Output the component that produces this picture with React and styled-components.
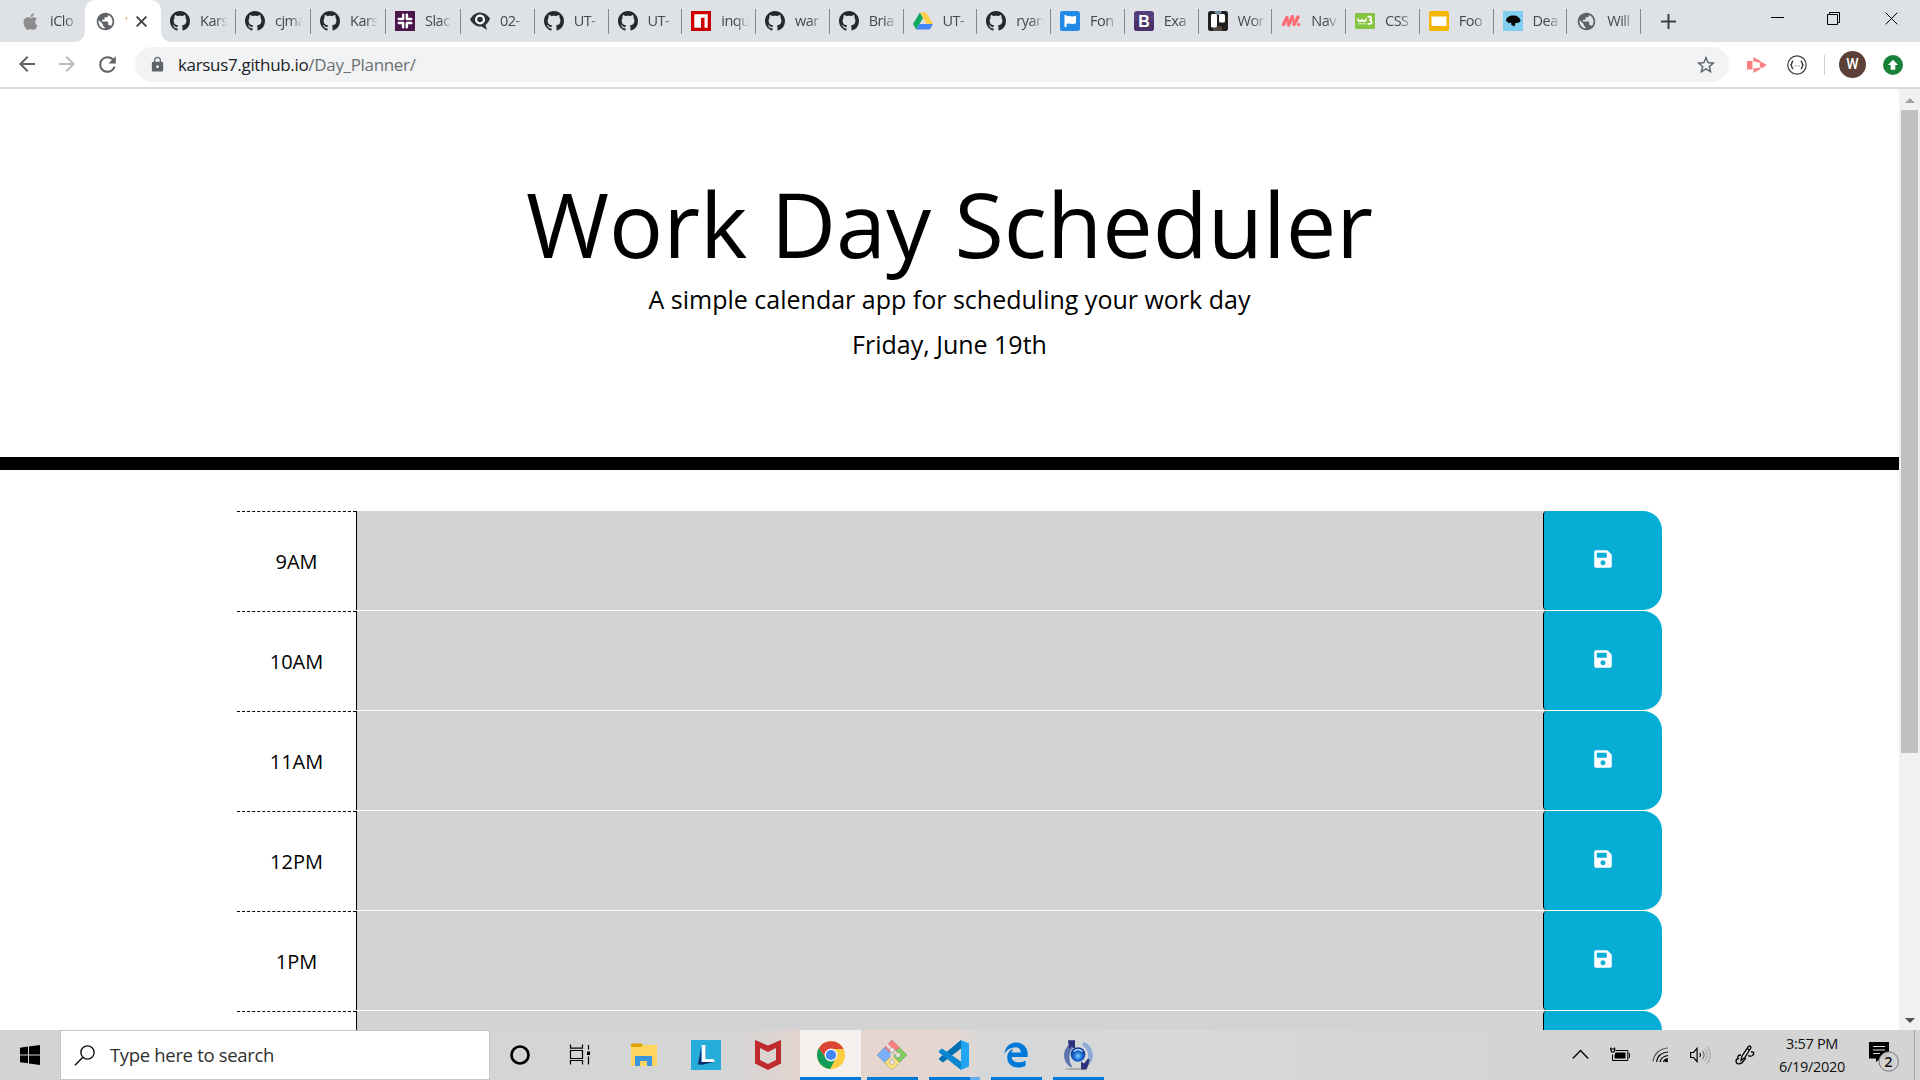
import React from "react";
import styled, { createGlobalStyle } from "styled-components";
import { FaApple, FaSave, FaEdgeLegacy } from "react-icons/fa";
import { MdPublic, MdLock, MdArrowBack, MdArrowForward, MdRefresh, MdStarBorder } from "react-icons/md";

const GlobalStyle = createGlobalStyle`
  * { box-sizing: border-box; }
  html, body { margin: 0; padding: 0; background: #fff; overflow: hidden; }
  svg { display: block; flex: none; }
`;

const Screen = styled.div`
  width: 1920px;
  height: 1080px;
  display: flex;
  flex-direction: column;
  overflow: hidden;
  font-family: "Open Sans", "Noto Sans", sans-serif;
  color: #000;
`;

/* ---------- Browser chrome ---------- */

const TabStrip = styled.div`
  height: 42px;
  flex: none;
  display: flex;
  background: #dee1e6;
`;

const Tab = styled.div`
  width: ${(p) => p.$width}px;
  height: 42px;
  flex: none;
  display: flex;
  align-items: center;
  padding-left: ${(p) => p.$pad ?? 9}px;
`;

const ActiveTab = styled(Tab)`
  background: #fff;
  border-radius: 10px 10px 0 0;
  position: relative;
  &::before,
  &::after {
    content: "";
    position: absolute;
    bottom: 0;
    width: 10px;
    height: 10px;
  }
  &::before {
    left: -10px;
    background: radial-gradient(circle at 0 0, transparent 9.5px, #fff 10px);
  }
  &::after {
    right: -10px;
    background: radial-gradient(circle at 100% 0, transparent 9.5px, #fff 10px);
  }
`;

const TabTitle = styled.span`
  min-width: 28px;
  margin-left: 10px;
  white-space: nowrap;
  font-size: 14.5px;
  letter-spacing: -0.5px;
  line-height: 20px;
  color: #45494d;
  mask-image: linear-gradient(to right, #000 15px, transparent 28px);
`;

const ActiveSliver = styled.span`
  width: 4px;
  margin-left: 9px;
  font-size: 13px;
  line-height: 18px;
  color: #d99a4a;
`;

const TabDivider = styled.i`
  width: 1px;
  height: 25px;
  margin-left: auto;
  background: #85888d;
`;

const CloseSlot = styled.span`
  margin-left: 7px;
`;

const WindowButtons = styled.div`
  display: flex;
  flex: 1;
  align-items: center;
  padding-left: 20px;
`;

const WindowGlyph = styled.span`
  margin-left: ${(p) => p.$gap}px;
  margin-top: ${(p) => p.$drop ?? -5}px;
`;

const Toolbar = styled.div`
  height: 47px;
  flex: none;
  display: flex;
  align-items: center;
  border-bottom: 2px solid #d9dae0;
  background: #fff;
`;

const NavButtons = styled.div`
  width: 135px;
  display: flex;
  padding-left: 15px;
  gap: 16px;
  color: #5f6368;
`;

const AddressBar = styled.div`
  width: 1594px;
  height: 35px;
  display: flex;
  align-items: center;
  padding: 0 12px 0 14px;
  border-radius: 18px;
  background: #f1f3f4;
  color: #5f6368;
`;

const Url = styled.span`
  flex: 1;
  margin-left: 12px;
  font-size: 17px;
  letter-spacing: -0.33px;
  line-height: 24px;
  white-space: nowrap;
  color: #6b6f73;
  b { font-weight: 400; color: #202124; }
`;

const Extensions = styled.div`
  display: flex;
  flex: 1;
  align-items: center;
  padding-left: 18px;
`;

const ToolDivider = styled.i`
  width: 1px;
  height: 20px;
  margin-left: 17px;
  background: #cdd0d3;
`;

const Avatar = styled.span`
  width: 27px;
  height: 27px;
  margin: 0 17px 0 14px;
  border-radius: 50%;
  background: #5d4037;
  color: #fff;
  font: 500 14px/27px Roboto, sans-serif;
  text-align: center;
`;

/* ---------- Page ---------- */

const Viewport = styled.div`
  height: 941px;
  flex: none;
  display: flex;
`;

const Page = styled.main`
  width: 1899px;
  height: 941px;
  overflow: hidden;
  background: #fff;
`;

const Jumbotron = styled.header`
  height: 381px;
  display: flex;
  flex-direction: column;
  align-items: center;
  padding-top: 80px;
  border-bottom: 13px solid #000;
`;

const Title = styled.h1`
  margin: 0 0 3px;
  font-size: 90px;
  font-weight: 400;
  line-height: 108px;
  white-space: nowrap;
`;

const Lead = styled.p`
  margin: 0 0 7px;
  font-size: 25px;
  line-height: 38px;
  white-space: nowrap;
`;

const Planner = styled.section`
  width: 1425px;
  margin: 41px 0 0 237px;
`;

const TimeBlock = styled.div`
  height: 100px;
  display: flex;
`;

const Hour = styled.div`
  width: 119px;
  height: 100px;
  padding-top: 35px;
  border-top: 1px dashed #000;
  font-size: 20px;
  line-height: 30px;
  text-align: center;
`;

const Entry = styled.div`
  width: 1187px;
  height: 99px;
  border-left: 1px solid #000;
  background: #d3d3d3;
`;

const SaveCell = styled.div`
  width: 119px;
  height: 99px;
  background: linear-gradient(to right, #d3d3d3 4px, transparent 4px);
`;

const SaveButton = styled.button`
  width: 119px;
  height: 99px;
  display: flex;
  align-items: center;
  justify-content: center;
  padding: 0 0 3px;
  border: 0;
  border-left: 1px solid #000;
  border-radius: 4px 19px 19px 4px;
  background: #06aed5;
  color: #fff;
`;

const Scrollbar = styled.aside`
  width: 21px;
  height: 941px;
  display: flex;
  flex-direction: column;
  align-items: center;
  background: #f1f1f1;
  padding: 9px 0 7px;
`;

const Thumb = styled.div`
  width: 17px;
  height: 643px;
  margin: 7px 0 auto;
  background: #c1c1c1;
`;

const ScrollArrow = styled.i`
  border: 5px solid transparent;
  ${(p) => (p.$up ? "border-bottom-color: #a3a3a3; border-top: 0;" : "border-top-color: #505050; border-bottom: 0;")}
`;

/* ---------- Taskbar ---------- */

const Taskbar = styled.footer`
  height: 50px;
  flex: none;
  display: flex;
  background: linear-gradient(to right, #d3d3d3 0, #d5d5d5 735px, #e2d4cf 800px, #e5d6cf 900px, #e4d7d0 955px, #d6d7d8 985px, #d7d8d8 1180px, #d4d4d4 1500px);
`;

const StartButton = styled.div`
  width: 60px;
  display: flex;
  align-items: center;
  padding-left: 20px;
`;

const SearchBox = styled.div`
  width: 430px;
  height: 50px;
  display: flex;
  align-items: center;
  padding-left: 13px;
  border: 1px solid #c8c8c8;
  background: #fff;
`;

const SearchText = styled.span`
  margin: 0 0 1px 15px;
  font-size: 18.5px;
  letter-spacing: -0.33px;
  line-height: 26px;
  white-space: nowrap;
  color: #2f2f2f;
`;

const Apps = styled.div`
  display: flex;
  margin-left: -1px;
`;

const AppTile = styled.div`
  width: ${(p) => (p.$active ? 61 : 62)}px;
  height: 50px;
  margin-left: ${(p) => (p.$active ? 1 : 0)}px;
  display: flex;
  flex-direction: column;
  align-items: center;
  justify-content: space-between;
  padding-top: 10px;
  background: ${(p) => (p.$active ? "#f4f0ed" : "transparent")};
`;

const Indicator = styled.i`
  width: ${(p) => (p.$wide ? 61 : 51)}px;
  height: 3px;
  margin-left: ${(p) => (p.$wide ? 0 : 1)}px;
  background: ${(p) => (p.$split ? "linear-gradient(to right, #0078d7 41px, #66acea 41px)" : "#0078d7")};
`;

const Tray = styled.div`
  flex: 1;
  display: flex;
  align-items: center;
  justify-content: flex-end;
`;

const TrayItem = styled.span`
  margin-right: ${(p) => p.$gap}px;
`;

const Clock = styled.div`
  width: 80px;
  margin-right: 17px;
  display: flex;
  flex-direction: column;
  align-items: center;
  font-size: 14.5px;
  letter-spacing: -0.3px;
  line-height: 23px;
  color: #111;
  white-space: nowrap;
`;

const ShowDesktop = styled.i`
  width: 6px;
  height: 50px;
  border-left: 1px solid #a5a5a5;
`;

/* ---------- Drawings ---------- */

const GithubIcon = () => (
  <svg width="20" height="20" viewBox="0 0 16 16">
    <path fill="#24292e" d="M8 0C3.58 0 0 3.58 0 8c0 3.54 2.29 6.53 5.47 7.59.4.07.55-.17.55-.38 0-.19-.01-.82-.01-1.49-2.01.37-2.53-.49-2.69-.94-.09-.23-.48-.94-.82-1.13-.28-.15-.68-.52-.01-.53.63-.01 1.08.58 1.23.82.72 1.21 1.87.87 2.33.66.07-.52.28-.87.51-1.07-1.78-.2-3.64-.89-3.64-3.95 0-.87.31-1.59.82-2.15-.08-.2-.36-1.02.08-2.12 0 0 .67-.21 2.2.82.64-.18 1.32-.27 2-.27.68 0 1.36.09 2 .27 1.53-1.04 2.2-.82 2.2-.82.44 1.1.16 1.92.08 2.12.51.56.82 1.27.82 2.15 0 3.07-1.87 3.75-3.65 3.95.29.25.54.73.54 1.48 0 1.07-.01 1.93-.01 2.2 0 .21.15.46.55.38A8.013 8.013 0 0016 8c0-4.42-3.58-8-8-8z" />
  </svg>
);

const SlackIcon = () => (
  <svg width="20" height="20" viewBox="0 0 20 20">
    <rect width="20" height="20" fill="#4a154b" />
    <g stroke="#fff" strokeWidth="2.5" strokeLinecap="round">
      <path d="M8.200 7.300V3.800M11.900 3.800v4.200M12.700 8.100h3.500M12 11.900h4.200M11.800 12.700v3.500M8.100 12v4.200M7.300 11.900H3.800M8 8.100H3.800" />
    </g>
  </svg>
);

const EyeIcon = () => (
  <svg width="20" height="20" viewBox="0 0 20 20">
    <path d="M0 8.5C3 3.5 6 1.5 10 1.5s7.500 2 10 6c-1 3-2.500 5-4.500 6.500l1.500 5-5.500-3.500C6.500 16 2.500 13 0 8.500z" fill="#2b3437" />
    <circle cx="10" cy="8.500" r="5" fill="#fff" />
    <circle cx="10" cy="8.500" r="2.800" fill="#2b3437" />
  </svg>
);

const NpmIcon = () => (
  <svg width="20" height="20" viewBox="0 0 20 20">
    <rect width="20" height="20" fill="#cb0000" />
    <path d="M3.300 3.300h13.400v13.400h-3.200V6.700H10v10H3.300z" fill="#fff" />
  </svg>
);

const DriveIcon = () => (
  <svg width="20" height="20" viewBox="0 0 20 20">
    <path d="M6.800 1.500h6.400L20 13h-6.500z" fill="#ffcf45" />
    <path d="M6.800 1.500L10 7 3.300 18.500 0 13z" fill="#11a861" />
    <path d="M6.600 13H20l-3.200 5.500H3.300z" fill="#4285f4" />
  </svg>
);

const FlagIcon = () => (
  <svg width="20" height="20" viewBox="0 0 20 20">
    <rect width="20" height="20" rx="2.500" fill="#228ae6" />
    <path d="M4.500 4h2v1.200c3-1 5 1.300 9.500-.5v7.600c-4 1.800-6-.5-9.500.6V16h-2z" fill="#fff" />
  </svg>
);

const BootstrapIcon = () => (
  <svg width="20" height="20" viewBox="0 0 20 20">
    <rect width="20" height="20" rx="3" fill="#563d7c" />
    <rect y="10" width="20" height="10" rx="3" fill="#4a3068" />
    <text x="10" y="15.500" textAnchor="middle" fill="#fff" fontFamily="Liberation Sans, sans-serif" fontWeight="700" fontSize="16">B</text>
  </svg>
);

const TrelloIcon = () => (
  <svg width="20" height="20" viewBox="0 0 20 20">
    <rect width="20" height="20" rx="2.500" fill="#20201f" />
    <path d="M6 0h8l-2 4H8z" fill="#6f8d9d" />
    <path d="M5 17l8-2 2 5H5z" fill="#54463f" />
    <rect x="3" y="3" width="6" height="13.500" rx="1.500" fill="#fff" />
    <rect x="11" y="3" width="6" height="8.500" rx="1.500" fill="#fff" />
  </svg>
);

const NavIcon = () => (
  <svg width="20" height="20" viewBox="0 0 20 20">
    <path d="M2.500 13.500L6 6.500M7.500 14l4-8.500M13 13.500l4-7.500" stroke="#fa6b74" strokeWidth="3.400" strokeLinecap="round" />
    <path d="M6.200 6.500l1.500 7M11.500 6l1.500 7" stroke="#fa6b74" strokeWidth="2" />
    <circle cx="17.600" cy="13.600" r="1.700" fill="#fa6b74" />
  </svg>
);

const W3Icon = () => (
  <svg width="20" height="20" viewBox="0 0 20 20">
    <rect y="2" width="20" height="16" rx="1" fill="#85c440" />
    <path d="M3 7.500c0 3.500 3.500 3.500 3.800.5.300 3 4 3 4.400-.5M12.500 6.200c4-2.200 5 2.600 1.800 3 4.200.5 2.700 5-1.800 3.300" fill="none" stroke="#fff" strokeWidth="1.700" />
    <path d="M3 12.800h8" stroke="#d9efbd" strokeWidth="1" />
  </svg>
);

const SlidesIcon = () => (
  <svg width="20" height="20" viewBox="0 0 20 20">
    <rect width="20" height="20" rx="2" fill="#f5b400" />
    <rect x="2.500" y="5.500" width="15" height="9.500" fill="#fff" />
  </svg>
);

const DeaIcon = () => (
  <svg width="20" height="20" viewBox="0 0 20 20">
    <rect width="20" height="20" fill="#81cff0" />
    <path d="M3 10c0-3.500 3.500-6 8-5.500 3 0 5 1.500 6.500 4.500.5 2-1.500 3-5 3l-1 3.500L8.500 14l-.5-2.500-2.500.7-1-1.500z" fill="#050505" />
  </svg>
);

const CloseIcon = ({ size = 13, stroke = 1, color = "#000" }) => (
  <svg width={size} height={size} viewBox="0 0 13 13">
    <path d="M.7.7l11.600 11.600M12.300.7L.7 12.300" stroke={color} strokeWidth={stroke} />
  </svg>
);

const RecorderIcon = () => (
  <svg width="20" height="18" viewBox="0 0 20 18">
    <path d="M0 5h5.500v8.500H0z" fill="#fb7f80" />
    <path d="M6.500 1l7 4-1 2-4-1.500-2 .5zM6.500 17l7-4-1-1.500-4 1-2-.5zM13.500 5.500L20 9l-6 3.800-1.500-3.800z" fill="#fb7f80" />
  </svg>
);

const BracesIcon = () => (
  <svg width="20" height="20" viewBox="0 0 20 20">
    <circle cx="10" cy="10" r="9.200" fill="none" stroke="#3f4144" strokeWidth="1.200" />
    <path d="M6.300 6.300c-2 0-1 2.800-2.300 3.700 1.300.9.300 3.700 2.300 3.700M13.700 6.300c2 0 1 2.800 2.300 3.700-1.300.9-.3 3.700-2.300 3.700" fill="none" stroke="#333" strokeWidth="1.400" />
    <path d="M7.500 10.800h5" stroke="#888" strokeWidth="1.200" strokeDasharray="1 1" />
  </svg>
);

const UpdateIcon = () => (
  <svg width="20" height="20" viewBox="0 0 20 20">
    <circle cx="10" cy="10" r="10" fill="#188038" />
    <path d="M10 4.800l5 5.200h-2.700v4.800H7.700V10H5z" fill="#fff" />
  </svg>
);

const WindowsIcon = () => (
  <svg width="20" height="20" viewBox="0 0 20 20">
    <path d="M0 2.700L8 1.600v7.800H0zM9 1.400L20 0v9.400H9zM0 10.400h8v7.900L0 17.200zM9 10.400h11V20L9 18.500z" fill="#000" />
  </svg>
);

const SearchIcon = () => (
  <svg width="21" height="21" viewBox="0 0 21 21">
    <circle cx="13.500" cy="7.500" r="6.600" fill="none" stroke="#111" strokeWidth="1.400" />
    <path d="M8.800 12.200L1 20.300" stroke="#111" strokeWidth="1.500" />
  </svg>
);

const CortanaIcon = () => (
  <svg width="30" height="30" viewBox="0 0 30 30">
    <circle cx="15" cy="15" r="8.500" fill="none" stroke="#000" strokeWidth="2.700" />
  </svg>
);

const TaskViewIcon = () => (
  <svg width="30" height="30" viewBox="0 0 30 30">
    <path d="M3.500 4.500v3.600h12V4.500M3.500 24.500v-4h12v4M3.500 10.500h12v8h-12zM21.500 5v4.500M21.500 16.500v8" fill="none" stroke="#000" strokeWidth="1.200" />
    <rect x="20" y="11.500" width="3" height="3.500" fill="#000" />
  </svg>
);

const FolderIcon = () => (
  <svg width="30" height="30" viewBox="0 0 30 30">
    <path d="M2 7h9.500L14 5h14v21H2z" fill="#ffd75e" />
    <path d="M2 14h26v12H2z" fill="#fed263" />
    <path d="M2 7V4.500Q2 3.500 3 3.500h9.500l1.200 1.500-1.700 2z" fill="#e0a100" />
    <path d="M6 26V16h17v10h-5v-5h-7v5z" fill="#3a96dd" />
  </svg>
);

const LIcon = () => (
  <svg width="30" height="30" viewBox="0 0 30 30">
    <rect width="30" height="30" fill="#26acd9" />
    <path d="M10.500 5L7 24.500l4 .2L23 22l-12-1z" fill="#0b2f66" />
    <text x="9" y="22" fill="#fff" fontFamily="Liberation Sans, sans-serif" fontWeight="700" fontSize="24">L</text>
  </svg>
);

const ShieldIcon = () => (
  <svg width="30" height="30" viewBox="0 0 30 30">
    <path d="M2 0l13 5.500L28 0v23.500L15 30 2 23.500zM7 8v12l8 4 8-4V8l-8 4z" fill="#bf2a2d" fillRule="evenodd" />
  </svg>
);

const ChromeIcon = () => (
  <svg width="30" height="30" viewBox="0 0 30 30">
    <circle cx="15" cy="15" r="14" fill="#ffcd40" />
    <path d="M2.900 8A14 14 0 0 0 14 29l6-11-5-3-5.500 2.500z" fill="#0f9d58" />
    <path d="M15 9h12.500A14 14 0 0 0 2.900 8L9 17z" fill="#db4437" />
    <circle cx="15" cy="15" r="6.500" fill="#f5f5f5" />
    <circle cx="15" cy="15" r="5.100" fill="#4285f4" />
  </svg>
);

const GitIcon = () => (
  <svg width="30" height="30" viewBox="0 0 30 30">
    <g stroke="#777" strokeWidth=".7" strokeDasharray="1.500 1">
      <path d="M15 0l7.500 7.500L15 15 7.500 7.500z" fill="#fb7d7d" />
      <path d="M22.500 7.500L30 15l-7.500 7.500L15 15z" fill="#82cf5c" />
      <path d="M15 15l7.500 7.500L15 30l-7.500-7.500z" fill="#fde37a" />
      <path d="M7.500 7.500L15 15l-7.500 7.500L0 15z" fill="#7db0fb" />
    </g>
    <path d="M9 4l6 6v13M15 10l6 5" fill="none" stroke="#e6d8d2" strokeWidth="3" />
    <g fill="#eee4e0" stroke="#888" strokeWidth=".5">
      <circle cx="15" cy="10" r="2.500" /><circle cx="15" cy="22" r="2.500" /><circle cx="21" cy="15" r="2.500" />
    </g>
  </svg>
);

const CodeIcon = () => (
  <svg width="30" height="30" viewBox="0 0 30 30">
    <path d="M22 0v8.500L4 22.500 0 19.500v-1.300z" fill="#0070b5" />
    <path d="M0 10.800L3 8.500 22 21.500V30L0 12.500z" fill="#0a86d0" />
    <path d="M22 0l8 3.500v23L22 30z" fill="#22a6f2" />
  </svg>
);

const SyncIcon = () => (
  <svg width="30" height="30" viewBox="0 0 30 30">
    <defs>
      <radialGradient id="orb" cx=".5" cy=".6">
        <stop offset="0" stopColor="#7fd4ff" />
        <stop offset=".55" stopColor="#1f6ed2" />
        <stop offset="1" stopColor="#0a3b9c" />
      </radialGradient>
    </defs>
    <ellipse cx="12" cy="29" rx="10" ry="1" fill="#aaa" />
    <path d="M8.500 4.500C-.5 9-.5 21 8.500 27C4.500 21 4.500 11 10 7z" fill="#5e74ad" stroke="#5e74ad" strokeWidth="1.500" />
    <path d="M21 3c9 4 11 16 3.500 22C27 17 26 9 20 5z" fill="#8fa9d6" stroke="#8fa9d6" strokeWidth="1.500" />
    <path d="M5 .3h7V9L8.500 6.500 6 9z" fill="#2c317c" />
    <path d="M18 21.500l3 2 4-5 1.500 1-1 5-2 5H18z" fill="#2c317c" />
    <circle cx="15" cy="14.500" r="7.300" fill="url(#orb)" />
    <path d="M10.500 11.500q4.500-4 9 0" stroke="#b9ddfa" strokeWidth="1.200" fill="none" />
  </svg>
);

const EdgeIcon = () => (
  <svg width="30" height="30" viewBox="0 0 30 30">
    <g transform="translate(2 2)"><FaEdgeLegacy size={26} color="#0078d7" /></g>
  </svg>
);

const CaretIcon = () => (
  <svg width="17" height="20" viewBox="0 0 17 20">
    <path d="M.8 13.500L8.500 5.500l7.700 8" fill="none" stroke="#000" strokeWidth="1.300" />
  </svg>
);

const BatteryIcon = () => (
  <svg width="20" height="20" viewBox="0 0 20 20">
    <path d="M5.500 5.500h12.300v10H2.500V9.500M18.500 8.500h1v4h-1" fill="none" stroke="#000" strokeWidth="1" />
    <path d="M5.500 7.500h10v6h-11v-3z" fill="#000" />
    <path d="M1 2.500v3a1.700 1.700 0 0 0 3.500 0v-3M0 4h5.500" fill="none" stroke="#000" strokeWidth="1.200" />
  </svg>
);

const WifiIcon = () => (
  <svg width="17" height="20" viewBox="0 0 17 20">
    <g fill="none" stroke="#000" strokeWidth="1.200">
      <path d="M1 16.500C2 8.500 8 3.500 16 3" stroke="#555" />
      <path d="M4.500 17c1-6 5-9.500 11.500-10" />
      <path d="M8 17c.8-3.500 3.500-6 8-6.500" />
      <path d="M11.500 17c.5-1.800 2-3 4.500-3.300" />
    </g>
    <circle cx="14.500" cy="15.700" r="1.500" fill="#000" />
  </svg>
);

const SpeakerIcon = () => (
  <svg width="22" height="20" viewBox="0 0 22 20">
    <path d="M.6 7.500h3l3.500-4.200v13.400L3.600 12.500h-3zM9.800 8c1 1.300 1 2.700 0 4" fill="none" stroke="#000" strokeWidth="1.200" />
    <path d="M12.300 5.800c2.400 2.700 2.400 5.800 0 8.500" fill="none" stroke="#555" strokeWidth="1" />
    <path d="M14.800 3.800c3.300 3.800 3.300 8.700 0 12.500M17 1.500c4.300 5.200 4.300 12 0 17" fill="none" stroke="#999" strokeWidth="1" />
  </svg>
);

const PenIcon = () => (
  <svg width="20" height="21" viewBox="0 0 20 21">
    <path d="M6 15.500l1-4.500L13.500 1.500c1-1.200 3 .1 2.300 1.500L9.700 12.800zM12 3.500l2.700 1.800" fill="none" stroke="#000" strokeWidth="1.300" />
    <path d="M6 10c-3 0-4 2-2.700 3.500C.3 14 .2 18.500 3.500 18.800c5 .3 4.500-4 7.500-5.500M13 10.500c1.500.5 2.500 1.500 4.500 0 2.200-2 1.500-4-1.500-3.500" fill="none" stroke="#000" strokeWidth="1.300" />
  </svg>
);

const ActionCenterIcon = () => (
  <svg width="30" height="34" viewBox="0 0 30 34">
    <path d="M0 4h20v16.500h-8.500L7 24v-3.500H0z" fill="#000" />
    <path d="M4 8.500h12M4 12h12M4 15.500h7" stroke="#ddd" strokeWidth="1" />
    <circle cx="19.700" cy="23.500" r="9.700" fill="#d3d3d3" fillOpacity=".93" stroke="#777" strokeWidth="1" />
    <text x="19.500" y="29" textAnchor="middle" fill="#111" fontFamily="Open Sans, sans-serif" fontSize="14.500" fontWeight="600">2</text>
  </svg>
);

const TABS = [
  [GithubIcon, "Kars", 75],
  [GithubIcon, "cjma", 75],
  [GithubIcon, "Kars", 75],
  [SlackIcon, "Slac", 75],
  [EyeIcon, "02-", 73.75],
  [GithubIcon, "UT-", 73.75],
  [GithubIcon, "UT-", 73.75],
  [NpmIcon, "inqu", 73.75],
  [GithubIcon, "war", 73.75],
  [GithubIcon, "Bria", 73.75],
  [DriveIcon, "UT-", 73.75],
  [GithubIcon, "ryan", 73.75],
  [FlagIcon, "Fon", 73.75],
  [BootstrapIcon, "Exa", 73.75],
  [TrelloIcon, "Wor", 73.75],
  [NavIcon, "Nav", 73.75],
  [W3Icon, "CSS", 73.75],
  [SlidesIcon, "Foo", 73.75],
  [DeaIcon, "Dea", 73.75],
  [() => <MdPublic size={21} color="#5f6368" />, "Will", 73.75],
];

const HOURS = ["9AM", "10AM", "11AM", "12PM", "1PM", "2PM"];

const APPS = [
  { Icon: CortanaIcon },
  { Icon: TaskViewIcon },
  { Icon: FolderIcon },
  { Icon: LIcon },
  { Icon: ShieldIcon },
  { Icon: ChromeIcon, active: true },
  { Icon: GitIcon, open: true },
  { Icon: CodeIcon, open: true, split: true },
  { Icon: EdgeIcon, open: true },
  { Icon: SyncIcon, open: true },
];

export default function App() {
  return (
    <>
      <GlobalStyle />
      <Screen>
        <TabStrip>
          <Tab $width={85} $pad={21}>
            <FaApple size={19} color="#8d8d8d" />
            <TabTitle>iClo</TabTitle>
          </Tab>
          <ActiveTab $width={76} $pad={10}>
            <MdPublic size={21} color="#5f6368" />
            <ActiveSliver>'</ActiveSliver>
            <CloseSlot><CloseIcon size={11} stroke={2.2} color="#3c4043" /></CloseSlot>
          </ActiveTab>
          {TABS.map(([Icon, title, width], i) => (
            <Tab key={i} $width={width}>
              <Icon />
              <TabTitle>{title}</TabTitle>
              <TabDivider />
            </Tab>
          ))}
          <WindowButtons>
            <WindowGlyph $gap={0} $drop={0}>
              <svg width="15" height="15" viewBox="0 0 15 15"><path d="M7.500 0v15M0 7.500h15" stroke="#3c4043" strokeWidth="2" /></svg>
            </WindowGlyph>
            <WindowGlyph $gap={95}>
              <svg width="13" height="13" viewBox="0 0 13 13"><path d="M0 5.500h13" stroke="#000" /></svg>
            </WindowGlyph>
            <WindowGlyph $gap={43}>
              <svg width="13" height="13" viewBox="0 0 13 13"><path d="M.5 2.500h10v10H.5zM2.500 2.500v-2h10v10h-2" fill="none" stroke="#000" /></svg>
            </WindowGlyph>
            <WindowGlyph $gap={45}><CloseIcon /></WindowGlyph>
          </WindowButtons>
        </TabStrip>

        <Toolbar>
          <NavButtons>
            <MdArrowBack size={24} />
            <MdArrowForward size={24} color="#bbbec1" />
            <MdRefresh size={25} />
          </NavButtons>
          <AddressBar>
            <MdLock size={17} />
            <Url><b>karsus7.github.io</b>/Day_Planner/</Url>
            <MdStarBorder size={22} />
          </AddressBar>
          <Extensions>
            <RecorderIcon />
            <WindowGlyph $gap={20} $drop={0}><BracesIcon /></WindowGlyph>
            <ToolDivider />
            <Avatar>W</Avatar>
            <UpdateIcon />
          </Extensions>
        </Toolbar>

        <Viewport>
          <Page>
            <Jumbotron>
              <Title>Work Day Scheduler</Title>
              <Lead>A simple calendar app for scheduling your work day</Lead>
              <Lead>Friday, June 19th</Lead>
            </Jumbotron>
            <Planner>
              {HOURS.map((hour) => (
                <TimeBlock key={hour}>
                  <Hour>{hour}</Hour>
                  <Entry />
                  <SaveCell>
                    <SaveButton><FaSave size={20} /></SaveButton>
                  </SaveCell>
                </TimeBlock>
              ))}
            </Planner>
          </Page>
          <Scrollbar>
            <ScrollArrow $up />
            <Thumb />
            <ScrollArrow />
          </Scrollbar>
        </Viewport>

        <Taskbar>
          <StartButton><WindowsIcon /></StartButton>
          <SearchBox>
            <SearchIcon />
            <SearchText>Type here to search</SearchText>
          </SearchBox>
          <Apps>
            {APPS.map(({ Icon, active, open, split }, i) => (
              <AppTile key={i} $active={active}>
                <Icon />
                {(active || open) && <Indicator $wide={active} $split={split} />}
              </AppTile>
            ))}
          </Apps>
          <Tray>
            <TrayItem $gap={21}><CaretIcon /></TrayItem>
            <TrayItem $gap={22}><BatteryIcon /></TrayItem>
            <TrayItem $gap={21}><WifiIcon /></TrayItem>
            <TrayItem $gap={23}><SpeakerIcon /></TrayItem>
            <TrayItem $gap={17}><PenIcon /></TrayItem>
            <Clock>
              <span>3:57 PM</span>
              <span>6/19/2020</span>
            </Clock>
            <TrayItem $gap={15}><ActionCenterIcon /></TrayItem>
            <ShowDesktop />
          </Tray>
        </Taskbar>
      </Screen>
    </>
  );
}
